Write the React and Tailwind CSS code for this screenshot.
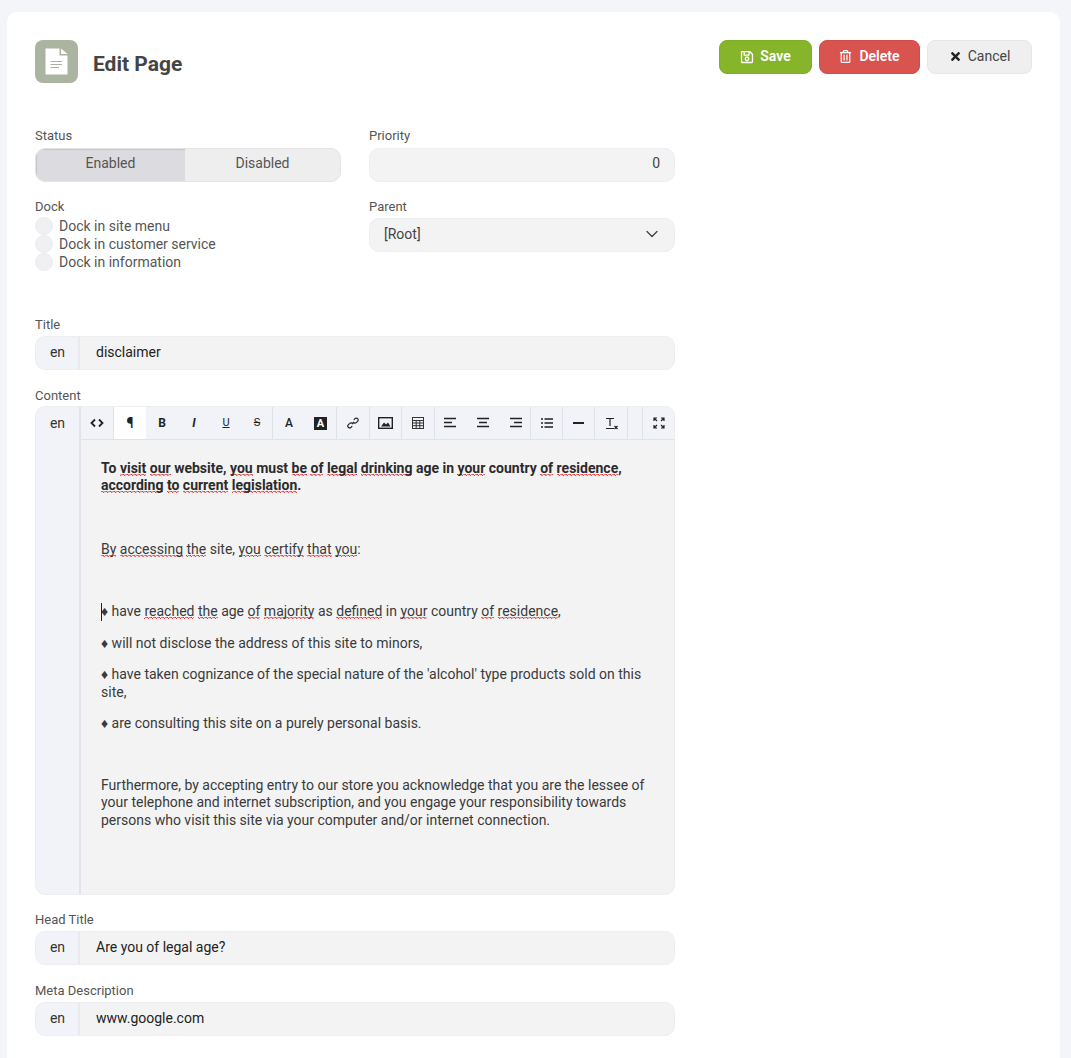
import { ChevronDown } from "lucide-react";
import { FaRegSave, FaRegTrashAlt, FaTimes } from "react-icons/fa";

// spell-check squiggle, smaller than text-decoration wavy
const Sp = ({ children }) => (
    <span className="bg-[linear-gradient(45deg,transparent_65%,#e02020_80%,transparent_90%),linear-gradient(135deg,transparent_5%,#e02020_15%,transparent_25%),linear-gradient(135deg,transparent_45%,#e02020_55%,transparent_65%),linear-gradient(45deg,transparent_25%,#e02020_35%,transparent_50%)] bg-[length:4px_2px] bg-repeat-x bg-bottom">{children}</span>
);

const Label = ({ children }) => <div className="text-[13px] leading-[16px] text-[#555]">{children}</div>;

const LangInput = ({ value }) => (
    <div className="mt-[3px] h-[34px] flex rounded-[10px] bg-[#f3f3f4] border border-[#eceef0] overflow-hidden">
        <div className="w-[44px] shrink-0 bg-[#f1f3f8] border-r-2 border-[#e8eaef] pl-[1px] pb-[1px] flex items-center justify-center text-[14px] text-[#333]">en</div>
        <div className="flex-1 pl-[16px] pb-[2px] flex items-center text-[14px] text-[#222]">{value}</div>
    </div>
);

const Sep = () => <div className="w-px h-full bg-[#dfe2e8] shrink-0" />;

const Tool = ({ w = "w-[32px]", active, children }) => (
    <div className={`${w} h-full shrink-0 flex items-center justify-center text-[#222] ${active ? "bg-white" : ""}`}>{children}</div>
);

const Radio = ({ label }) => (
    <div className="h-[18px] flex items-center gap-[6px] text-[14px] text-[#555]">
        <span className="w-[18px] h-[18px] rounded-full bg-[#f0f0f2] border border-[#ececee]" />
        {label}
    </div>
);

const IconCode = () => (
    <svg width="14" height="14" viewBox="0 0 14 14" fill="none" stroke="#222" strokeWidth="1.8"><path d="M5 3.5 1.5 7 5 10.5M9 3.5 12.5 7 9 10.5" /></svg>
);
const IconAlign = ({ lines }) => (
    <svg width="14" height="12" viewBox="0 0 14 12" fill="none" stroke="#222" strokeWidth="1.4">
        {lines.map((l, i) => <path key={i} d={`M${l[0]} ${1.5 + i * 4}H${l[1]}`} />)}
    </svg>
);

export default function App() {
    return (
        <div className="h-[1058px] overflow-hidden bg-[#f4f5f8] pt-[12px] pl-[7px] pr-[11px] font-['Roboto',sans-serif]">
            <div className="h-[1100px] bg-white rounded-t-[10px] pt-[28px] pl-[28px] pr-[28px]">
                {/* Header */}
                <div className="flex items-start justify-between">
                    <div className="flex items-center gap-[15px]">
                        <div className="w-[43px] h-[43px] rounded-[8px] bg-[#abb3a1] flex items-center justify-center">
                            <svg width="23" height="27" viewBox="0 0 23 27">
                                <path d="M0.5 0.5H14.5V7.5H22.5V26.5H0.5Z" fill="#fff" />
                                <path d="M16 0.5 22.5 6H16Z" fill="#fff" />
                                <path d="M5.5 13.5H17M5.5 16.5H17M5.5 19.5H14" stroke="#abb3a1" strokeWidth="1" />
                            </svg>
                        </div>
                        <h1 className="mt-[5px] text-[21px] font-bold text-[#444] leading-none">Edit Page</h1>
                    </div>
                    <div className="flex gap-[7px]">
                        <button className="w-[93px] h-[34px] pb-[1px] rounded-[8px] bg-[#86b52b] border border-[#7fae27] text-white font-semibold text-[14px] flex items-center justify-center gap-[6px]">
                            <FaRegSave size={14} />
                            Save
                        </button>
                        <button className="w-[101px] h-[34px] pb-[1px] rounded-[8px] bg-[#d9534f] border border-[#d24d49] text-white font-semibold text-[14px] flex items-center justify-center gap-[7px]">
                            <FaRegTrashAlt size={13} />
                            Delete
                        </button>
                        <button className="w-[105px] h-[34px] pb-[1px] rounded-[8px] bg-[#efefef] border border-[#e6e6e6] text-[#444] text-[14px] flex items-center justify-center gap-[6px]">
                            <FaTimes size={13} color="#222" />
                            Cancel
                        </button>
                    </div>
                </div>

                {/* Form */}
                <div className="w-[640px] mt-[45px]">
                    <div className="grid grid-cols-2 gap-x-[28px]">
                        <div>
                            <Label>Status</Label>
                            <div className="mt-[4px] h-[34px] flex rounded-[10px] bg-[#eeeeef] border border-[#e4e4e6] overflow-hidden text-[14px] text-[#555]">
                                <div className="w-[149px] pb-[3px] bg-[#dcdce0] shadow-[inset_1px_1px_1px_#c4c4c8] flex items-center justify-center">Enabled</div>
                                <div className="flex-1 pb-[3px] flex items-center justify-center">Disabled</div>
                            </div>
                            <div className="mt-[17px]"><Label>Dock</Label></div>
                            <div className="mt-[2px]">
                                <Radio label="Dock in site menu" />
                                <Radio label="Dock in customer service" />
                                <Radio label="Dock in information" />
                            </div>
                        </div>
                        <div>
                            <Label>Priority</Label>
                            <div className="mt-[4px] h-[34px] pb-[3px] rounded-[10px] bg-[#f3f3f4] border border-[#eceef0] flex items-center justify-end pr-[14px] text-[14px] text-[#444]">0</div>
                            <div className="mt-[17px]"><Label>Parent</Label></div>
                            <div className="mt-[3px] h-[34px] pb-[2px] rounded-[10px] bg-[#f3f3f4] border border-[#eceef0] flex items-center justify-between pl-[14px] pr-[12px] text-[14px] text-[#444]">
                                [Root]
                                <ChevronDown size={20} color="#444" strokeWidth={1.6} />
                            </div>
                        </div>
                    </div>

                    <div className="mt-[46px]"><Label>Title</Label></div>
                    <LangInput value="disclaimer" />

                    <div className="mt-[18px]"><Label>Content</Label></div>
                    <div className="mt-[2px] h-[489px] flex rounded-[10px] border border-[#eceef0] overflow-hidden bg-[#f3f3f4]">
                        <div className="w-[45px] shrink-0 bg-[#f1f3f8] border-r-2 border-[#e0e3ea] pt-[8px] text-center text-[14px] leading-[16px] text-[#333]">en</div>
                        <div className="flex-1 min-w-0">
                            <div className="h-[33px] bg-[#f1f3f8] border-b border-[#dfe2e8] flex items-center text-[#222]">
                                <Tool><IconCode /></Tool>
                                <Sep />
                                <Tool active><span className="text-[14px] font-bold leading-none">¶</span></Tool>
                                <Tool><span className="text-[12px] font-bold">B</span></Tool>
                                <Tool><span className="text-[12px] italic font-bold">I</span></Tool>
                                <Tool><span className="text-[11px] underline">U</span></Tool>
                                <Tool w="w-[30px]"><span className="text-[11px] line-through">S</span></Tool>
                                <Sep />
                                <Tool><span className="text-[12px] font-medium">A</span></Tool>
                                <Tool w="w-[31px]"><span className="w-[13px] h-[13px] bg-[#222] text-white text-[11px] font-bold leading-[13px] text-center">A</span></Tool>
                                <Sep />
                                <Tool>
                                    <svg width="12" height="12" viewBox="0 0 12 12" fill="none" stroke="#222" strokeWidth="1.2"><path d="M5 7.2 7.2 5M6.8 2.8 7.9 1.7a1.9 1.9 0 0 1 2.7 2.7L9.2 5.6a1.9 1.9 0 0 1-2.7 0M5.2 9.2 4.1 10.3a1.9 1.9 0 0 1-2.7-2.7L2.8 6.4a1.9 1.9 0 0 1 2.7 0" /></svg>
                                </Tool>
                                <Sep />
                                <Tool w="w-[31px]">
                                    <svg width="15" height="12" viewBox="0 0 15 12"><rect x="0.7" y="0.7" width="13.6" height="10.6" fill="none" stroke="#222" strokeWidth="1.4" /><path d="M3 9.5 6 5.5 8 7.5 10 5.5 12.5 9.5Z" fill="#222" /></svg>
                                </Tool>
                                <Sep />
                                <Tool>
                                    <svg width="12" height="12" viewBox="0 0 12 12" fill="none" stroke="#333" strokeWidth="1"><rect x="0.5" y="0.5" width="11" height="11" /><path d="M0.5 3.5H11.5M0.5 6H11.5M0.5 8.7H11.5M4.2 3.5V11.5M7.8 3.5V11.5" /></svg>
                                </Tool>
                                <Sep />
                                <Tool><IconAlign lines={[[0, 12], [0, 8], [0, 12]]} /></Tool>
                                <Tool><IconAlign lines={[[1, 13], [3, 11], [1, 13]]} /></Tool>
                                <Tool w="w-[31px]"><IconAlign lines={[[2, 14], [6, 14], [2, 14]]} /></Tool>
                                <Sep />
                                <Tool w="w-[31px]">
                                    <svg width="12" height="10" viewBox="0 0 12 10" fill="none" stroke="#222" strokeWidth="1.3"><path d="M3.5 1H12M3.5 5H12M3.5 9H12M0 1H2M0 5H2M0 9H2" /></svg>
                                </Tool>
                                <Sep />
                                <Tool w="w-[31px]"><div className="w-[11px] h-[2px] bg-[#222]" /></Tool>
                                <Sep />
                                <Tool>
                                    <svg width="13" height="13" viewBox="0 0 13 13" fill="none" stroke="#222" strokeWidth="1.2"><path d="M1 1.5H9M5 1.5V9M1 11.5H9M9.5 9 12.5 12M12.5 9 9.5 12" /></svg>
                                </Tool>
                                <Sep />
                                <Tool w="w-[14px]" />
                                <Sep />
                                <Tool w="flex-1">
                                    <svg width="12" height="12" viewBox="0 0 12 12" fill="none" stroke="#222" strokeWidth="1.2"><path d="M1 4V1H4M1 1 4 4M8 1H11V4M11 1 8 4M1 8V11H4M1 11 4 8M11 8V11H8M11 11 8 8" /></svg>
                                </Tool>
                            </div>

                            <div className="pl-[20px] pr-[26px] pt-[19.5px] text-[14px] leading-[17.5px] text-[#3a3a3a]">
                                <p className="font-bold text-[#2b2b2b]">
                                    To <Sp>visit</Sp> <Sp>our</Sp> website, <Sp>you</Sp> must <Sp>be</Sp> <Sp>of</Sp> <Sp>legal</Sp> <Sp>drinking</Sp> age in <Sp>your</Sp> country <Sp>of</Sp> <Sp>residence</Sp>, <Sp>according</Sp> <Sp>to</Sp> <Sp>current</Sp> <Sp>legislation</Sp>.
                                </p>
                                <p className="mt-[46px]">
                                    <Sp>By</Sp> <Sp>accessing</Sp> <Sp>the</Sp> site, <Sp>you</Sp> <Sp>certify</Sp> <Sp>that</Sp> <Sp>you</Sp>:
                                </p>
                                <p className="mt-[45px] relative">
                                    <span className="absolute left-0 top-0 w-px h-[18px] bg-[#222]" />
                                    ♦ have <Sp>reached</Sp> <Sp>the</Sp> age <Sp>of</Sp> <Sp>majority</Sp> as <Sp>defined</Sp> in <Sp>your</Sp> country <Sp>of</Sp> <Sp>residence</Sp>,
                                </p>
                                <p className="mt-[14px]">♦ will not disclose the address of this site to minors,</p>
                                <p className="mt-[14px]">♦ have taken cognizance of the special nature of the 'alcohol' type products sold on this site,</p>
                                <p className="mt-[14px]">♦ are consulting this site on a purely personal basis.</p>
                                <p className="mt-[44px]">Furthermore, by accepting entry to our store you acknowledge that you are the lessee of your telephone and internet subscription, and you engage your responsibility towards persons who visit this site via your computer and/or internet connection.</p>
                            </div>
                        </div>
                    </div>

                    <div className="mt-[17px]"><Label>Head Title</Label></div>
                    <LangInput value="Are you of legal age?" />
                    <div className="mt-[18px]"><Label>Meta Description</Label></div>
                    <LangInput value="www.google.com" />
                </div>
            </div>
        </div>
    );
}
